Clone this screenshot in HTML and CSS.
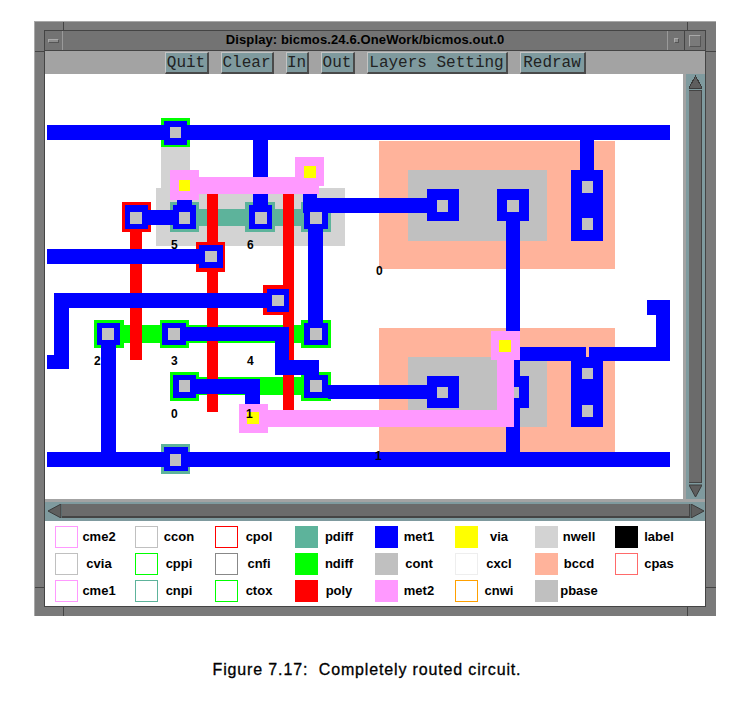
FILE: index.html
```html
<!DOCTYPE html>
<html lang="en">
<head>
    <meta charset="UTF-8">
    <title>Figure 7.17</title>
    <link rel="stylesheet" href="styles.css">
</head>
<body>
    <div class="window">
        <div class="client">
            <div class="titlebar">
                <div class="win-btn menu-btn"><span class="menu-mark"></span></div>
                <div class="win-title">Display: bicmos.24.6.OneWork/bicmos.out.0</div>
                <div class="win-btn min-btn"><span class="min-mark"></span></div>
                <div class="win-btn max-btn"><span class="max-mark"></span></div>
            </div>

            <div class="toolbar">
                <button class="tool-btn btn-quit">Quit</button>
                <button class="tool-btn btn-clear">Clear</button>
                <button class="tool-btn btn-in">In</button>
                <button class="tool-btn btn-out">Out</button>
                <button class="tool-btn btn-layers">Layers Setting</button>
                <button class="tool-btn btn-redraw">Redraw</button>
            </div>

            <div class="view-row">
                <svg class="circuit" viewBox="45 74 638 425" shape-rendering="crispEdges">
                    <!-- nwell -->
                    <g fill="#d3d3d3">
                        <rect x="161" y="125" width="29" height="65"/>
                        <rect x="156" y="188" width="189" height="58"/>
                    </g>
                    <!-- bccd + pbase -->
                    <rect x="379" y="141" width="236" height="128" fill="#ffb39b"/>
                    <rect x="379" y="328" width="236" height="124" fill="#ffb39b"/>
                    <rect x="408" y="170" width="139" height="71" fill="#c0c0c0"/>
                    <rect x="408" y="357" width="139" height="70" fill="#c0c0c0"/>
                    <!-- pdiff -->
                    <g fill="#5db39b">
                        <rect x="170" y="209" width="161" height="17"/>
                        <rect x="170" y="202" width="29" height="30"/>
                        <rect x="245" y="202" width="30" height="30"/>
                        <rect x="301" y="202" width="30" height="30"/>
                        <rect x="161" y="444" width="29" height="30"/>
                    </g>
                    <!-- ndiff -->
                    <g fill="#00ff00">
                        <rect x="161" y="118" width="29" height="29"/>
                        <rect x="94" y="325" width="237" height="18"/>
                        <rect x="94" y="320" width="30" height="28"/>
                        <rect x="160" y="320" width="29" height="28"/>
                        <rect x="301" y="320" width="30" height="28"/>
                        <rect x="170" y="377" width="161" height="18"/>
                        <rect x="170" y="372" width="29" height="29"/>
                        <rect x="301" y="372" width="30" height="29"/>
                    </g>
                    <!-- poly -->
                    <g fill="#ff0000">
                        <rect x="130" y="225" width="12" height="135"/>
                        <rect x="207" y="194" width="11" height="218"/>
                        <rect x="283" y="194" width="11" height="216"/>
                        <rect x="122" y="202" width="29" height="30"/>
                        <rect x="196" y="242" width="29" height="30"/>
                        <rect x="263" y="285" width="31" height="30"/>
                    </g>
                    <!-- met1 -->
                    <g fill="#0000ff">
                        <rect x="47" y="125" width="623" height="15"/>
                        <rect x="47" y="452" width="623" height="15"/>
                        <rect x="47" y="249" width="152" height="15"/>
                        <rect x="54" y="293" width="213" height="15"/>
                        <rect x="54" y="293" width="15" height="76"/>
                        <rect x="47" y="355" width="22" height="14"/>
                        <rect x="164" y="121" width="23" height="24"/>
                        <rect x="164" y="447" width="24" height="24"/>
                        <rect x="253" y="140" width="15" height="65"/>
                        <rect x="177" y="200" width="15" height="6"/>
                        <rect x="125" y="205" width="23" height="24"/>
                        <rect x="148" y="210" width="25" height="15"/>
                        <rect x="173" y="205" width="23" height="24"/>
                        <rect x="249" y="205" width="23" height="24"/>
                        <rect x="304" y="205" width="24" height="24"/>
                        <rect x="303" y="194" width="14" height="15"/>
                        <rect x="303" y="198" width="124" height="15"/>
                        <rect x="308" y="229" width="15" height="94"/>
                        <rect x="199" y="245" width="24" height="23"/>
                        <rect x="267" y="289" width="22" height="23"/>
                        <rect x="97" y="323" width="23" height="22"/>
                        <rect x="101" y="345" width="15" height="107"/>
                        <rect x="162" y="323" width="24" height="22"/>
                        <rect x="186" y="327" width="103" height="14"/>
                        <rect x="275" y="327" width="14" height="48"/>
                        <rect x="275" y="360" width="44" height="15"/>
                        <rect x="304" y="323" width="24" height="22"/>
                        <rect x="173" y="375" width="23" height="23"/>
                        <rect x="196" y="379" width="64" height="15"/>
                        <rect x="245" y="379" width="15" height="25"/>
                        <rect x="304" y="375" width="24" height="23"/>
                        <rect x="328" y="385" width="99" height="14"/>
                        <rect x="427" y="189" width="32" height="32"/>
                        <rect x="497" y="189" width="32" height="32"/>
                        <rect x="506" y="221" width="14" height="231"/>
                        <rect x="427" y="376" width="32" height="32"/>
                        <rect x="497" y="376" width="32" height="32"/>
                        <rect x="580" y="140" width="14" height="30"/>
                        <rect x="571" y="170" width="32" height="71"/>
                        <rect x="571" y="357" width="32" height="70"/>
                        <rect x="520" y="347" width="66" height="14"/>
                        <rect x="589" y="347" width="81" height="14"/>
                        <rect x="656" y="300" width="14" height="61"/>
                        <rect x="647" y="300" width="23" height="15"/>
                    </g>
                    <!-- cont -->
                    <g fill="#c0c0c0">
                        <rect x="170" y="127" width="11" height="11"/>
                        <rect x="170" y="454" width="11" height="12"/>
                        <rect x="130" y="212" width="12" height="12"/>
                        <rect x="179" y="212" width="11" height="12"/>
                        <rect x="255" y="212" width="12" height="12"/>
                        <rect x="310" y="212" width="12" height="12"/>
                        <rect x="205" y="251" width="12" height="11"/>
                        <rect x="272" y="295" width="12" height="11"/>
                        <rect x="102" y="328" width="12" height="12"/>
                        <rect x="168" y="328" width="12" height="12"/>
                        <rect x="310" y="328" width="12" height="12"/>
                        <rect x="179" y="380" width="11" height="12"/>
                        <rect x="310" y="380" width="12" height="12"/>
                        <rect x="437" y="200" width="11" height="12"/>
                        <rect x="507" y="200" width="12" height="12"/>
                        <rect x="582" y="181" width="11" height="12"/>
                        <rect x="582" y="218" width="11" height="12"/>
                        <rect x="437" y="387" width="11" height="11"/>
                        <rect x="507" y="387" width="12" height="11"/>
                        <rect x="582" y="368" width="11" height="11"/>
                        <rect x="582" y="405" width="11" height="12"/>
                    </g>
                    <!-- met2 -->
                    <g fill="#ff99ff">
                        <rect x="170" y="170" width="29" height="30"/>
                        <rect x="170" y="177" width="149" height="17"/>
                        <rect x="295" y="157" width="29" height="29"/>
                        <rect x="239" y="404" width="29" height="29"/>
                        <rect x="239" y="410" width="275" height="17"/>
                        <rect x="497" y="345" width="17" height="82"/>
                        <rect x="491" y="331" width="29" height="29"/>
                    </g>
                    <!-- via -->
                    <g fill="#ffff00">
                        <rect x="179" y="180" width="11" height="11"/>
                        <rect x="304" y="166" width="12" height="12"/>
                        <rect x="247" y="412" width="12" height="12"/>
                        <rect x="499" y="340" width="12" height="12"/>
                    </g>
                    <!-- node numbers -->
                    <g class="node-num">
                        <text x="171" y="249">5</text>
                        <text x="247" y="249">6</text>
                        <text x="376" y="275">0</text>
                        <text x="94" y="365">2</text>
                        <text x="171" y="365">3</text>
                        <text x="247" y="365">4</text>
                        <text x="171" y="418">0</text>
                        <text x="246" y="418">1</text>
                        <text x="375" y="460">1</text>
                    </g>
                </svg>
                <div class="vscroll">
                    <svg class="arrow-v" viewBox="0 0 13 16" shape-rendering="crispEdges"><path d="M6.5 2 L13 14 H0 Z" fill="#5e5e5e" stroke="#3a3a3a"/></svg>
                    <div class="vthumb"></div>
                    <svg class="arrow-v" viewBox="0 0 13 16"><path d="M6.5 14 L13 2 H0 Z" fill="#5e5e5e" stroke="#3a3a3a"/></svg>
                </div>
            </div>

            <div class="hscroll">
                <svg class="arrow-h" viewBox="0 0 15 14"><path d="M1 7 L14 0 V14 Z" fill="#5e5e5e" stroke="#3a3a3a"/></svg>
                <div class="hthumb"></div>
                <svg class="arrow-h" viewBox="0 0 15 14"><path d="M14 7 L1 0 V14 Z" fill="#5e5e5e" stroke="#3a3a3a"/></svg>
            </div>

            <div class="legend">
                <div class="layer"><span class="swatch c-cme"></span><span class="layer-name">cme2</span></div>
                <div class="layer"><span class="swatch c-gray"></span><span class="layer-name">cvia</span></div>
                <div class="layer"><span class="swatch c-cme"></span><span class="layer-name">cme1</span></div>

                <div class="layer"><span class="swatch c-gray"></span><span class="layer-name">ccon</span></div>
                <div class="layer"><span class="swatch c-lime"></span><span class="layer-name">cppi</span></div>
                <div class="layer"><span class="swatch c-teal"></span><span class="layer-name">cnpi</span></div>

                <div class="layer"><span class="swatch c-red"></span><span class="layer-name">cpol</span></div>
                <div class="layer"><span class="swatch c-dark"></span><span class="layer-name">cnfi</span></div>
                <div class="layer"><span class="swatch c-lime"></span><span class="layer-name">ctox</span></div>

                <div class="layer"><span class="swatch f-pdiff"></span><span class="layer-name">pdiff</span></div>
                <div class="layer"><span class="swatch f-ndiff"></span><span class="layer-name">ndiff</span></div>
                <div class="layer"><span class="swatch f-poly"></span><span class="layer-name">poly</span></div>

                <div class="layer"><span class="swatch f-met1"></span><span class="layer-name">met1</span></div>
                <div class="layer"><span class="swatch f-cont"></span><span class="layer-name">cont</span></div>
                <div class="layer"><span class="swatch f-met2"></span><span class="layer-name">met2</span></div>

                <div class="layer"><span class="swatch f-via"></span><span class="layer-name">via</span></div>
                <div class="layer"><span class="swatch c-pale"></span><span class="layer-name">cxcl</span></div>
                <div class="layer"><span class="swatch c-orange"></span><span class="layer-name">cnwi</span></div>

                <div class="layer"><span class="swatch f-nwell"></span><span class="layer-name">nwell</span></div>
                <div class="layer"><span class="swatch f-bccd"></span><span class="layer-name">bccd</span></div>
                <div class="layer"><span class="swatch f-cont"></span><span class="layer-name">pbase</span></div>

                <div class="layer"><span class="swatch f-label"></span><span class="layer-name">label</span></div>
                <div class="layer"><span class="swatch c-pas"></span><span class="layer-name">cpas</span></div>
            </div>
        </div>
    </div>

    <p class="caption">Figure 7.17:  Completely routed circuit.</p>
</body>
</html>
```

FILE: styles.css
```css
body {
    margin: 0;
    background: #fff;
    font-family: "Liberation Sans", Arial, sans-serif;
}

/* motif style frame */
.window {
    box-sizing: border-box;
    width: 682px;
    height: 595px;
    margin: 21px 0 0 34px;
    padding: 9px 11px 9px 10px;
    background-color: #7a7a7a;
    background-image:
        linear-gradient(#444, #444), linear-gradient(#444, #444),
        linear-gradient(#444, #444), linear-gradient(#444, #444),
        linear-gradient(#444, #444), linear-gradient(#444, #444),
        linear-gradient(#444, #444), linear-gradient(#444, #444);
    background-size: 1px 10px, 1px 10px, 1px 10px, 1px 10px, 10px 1px, 10px 1px, 10px 1px, 10px 1px;
    background-position: 28px 0, 652px 0, 28px 100%, 652px 100%, 0 29px, 100% 29px, 0 565px, 100% 565px;
    background-repeat: no-repeat;
    border-top: 1px solid #a8a8a8;
    border-left: 1px solid #a8a8a8;
}
.client {
    box-shadow: 0 0 0 1px #444;
}

.titlebar {
    display: flex;
    height: 20px;
    background: #737373;
    border-bottom: 1px solid #444;
    box-sizing: border-box;
}
.win-btn {
    display: flex;
    align-items: center;
    justify-content: center;
    width: 18px;
    box-sizing: border-box;
}
.menu-btn {
    border-right: 1px solid #9a9a9a;
}
.min-btn {
    border-left: 1px solid #9a9a9a;
    border-right: 1px solid #444;
}
.max-btn {
    width: 20px;
}
.menu-mark {
    width: 9px;
    height: 2px;
    background: #8d8d8d;
    border: 1px solid #555;
    border-top-color: #aaa;
    border-left-color: #aaa;
}
.min-mark {
    width: 3px;
    height: 3px;
    background: #8d8d8d;
    border: 1px solid #555;
    border-top-color: #aaa;
    border-left-color: #aaa;
}
.max-mark {
    width: 10px;
    height: 10px;
    background: #7a7a7a;
    border: 1px solid #a8a8a8;
    border-right-color: #555;
    border-bottom-color: #555;
}
.win-title {
    flex: 1;
    text-align: center;
    font-size: 13px;
    font-weight: bold;
    letter-spacing: 0.12px;
    line-height: 18px;
    color: #000;
}

.toolbar {
    display: flex;
    justify-content: center;
    gap: 12px;
    height: 23px;
    padding-top: 1px;
    box-sizing: border-box;
    background: #a3a3a3;
}
.tool-btn {
    box-sizing: border-box;
    height: 22px;
    padding: 0;
    background: #7f9a9e;
    border: 1px solid #4a4a4a;
    border-top-color: #c4c4c4;
    border-left-color: #c4c4c4;
    border-right-width: 2px;
    border-bottom-width: 2px;
    font-family: "Liberation Mono", "Courier New", monospace;
    font-size: 16px;
    line-height: 18px;
    color: #222;
}
.btn-quit { width: 44px; }
.btn-clear { width: 53px; }
.btn-in { width: 23px; }
.btn-out { width: 34px; }
.btn-layers { width: 141px; }
.btn-redraw { width: 66px; }

.view-row {
    display: flex;
    height: 425px;
}
.circuit {
    display: block;
    width: 638px;
    height: 425px;
    background: #fff;
}
.node-num {
    font-family: "Liberation Sans", Arial, sans-serif;
    font-size: 12px;
    font-weight: bold;
    fill: #000;
}

.vscroll {
    display: flex;
    flex-direction: column;
    width: 22px;
    box-sizing: border-box;
    padding: 0 3px;
    background: #7f9a9e;
    border-left: 3px solid #a3a3a3;
}
.arrow-v {
    display: block;
    width: 13px;
    height: 16px;
    flex: none;
}
.vthumb {
    flex: 1;
    background: #6b6b6b;
    border-top: 1px solid #444;
    border-bottom: 1px solid #444;
    border-right: 1px solid #444;
}

.hscroll {
    display: flex;
    align-items: stretch;
    height: 22px;
    box-sizing: border-box;
    padding: 2px 0 3px 2px;
    background: #7f9a9e;
    border-top: 3px solid #a3a3a3;
}
.arrow-h {
    display: block;
    width: 15px;
    height: 14px;
    flex: none;
}
.hthumb {
    flex: 1;
    background: #6b6b6b;
    border-bottom: 2px solid #444;
    border-right: 1px solid #444;
}

.legend {
    display: grid;
    grid-auto-flow: column;
    grid-template-rows: repeat(3, 27px);
    grid-auto-columns: 80px;
    height: 85px;
    box-sizing: border-box;
    padding: 5px 0 0 10px;
    background: #fff;
}
.layer {
    display: flex;
    align-items: flex-start;
}
.swatch {
    box-sizing: border-box;
    width: 23px;
    height: 22px;
}
.layer-name {
    width: 42px;
    text-align: center;
    font-size: 13px;
    font-weight: bold;
    line-height: 22px;
    color: #000;
}

/* outlined layers */
.c-cme { border: 1px solid #ff99ff; }
.c-gray { border: 1px solid #c0c0c0; }
.c-red { border: 1px solid #ff0000; }
.c-dark { border: 1px solid #888; }
.c-lime { border: 1px solid #00ff00; }
.c-teal { border: 1px solid #5db39b; }
.c-pale { border: 1px solid #eee; }
.c-orange { border: 1px solid #ffa000; }
.c-pas { border: 1px solid #ff6a6a; }

/* filled layers */
.f-pdiff { background: #5db39b; }
.f-ndiff { background: #00ff00; }
.f-poly { background: #ff0000; }
.f-met1 { background: #0000ff; }
.f-cont { background: #c0c0c0; }
.f-met2 { background: #ff99ff; }
.f-via { background: #ffff00; }
.f-nwell { background: #d3d3d3; }
.f-bccd { background: #ffb39b; }
.f-label { background: #000; }

.caption {
    width: 734px;
    margin: 44px 0 0;
    text-align: center;
    white-space: pre;
    font-size: 16px;
    letter-spacing: 0.85px;
    -webkit-text-stroke: 0.3px #000;
    line-height: 20px;
    color: #000;
}
```
